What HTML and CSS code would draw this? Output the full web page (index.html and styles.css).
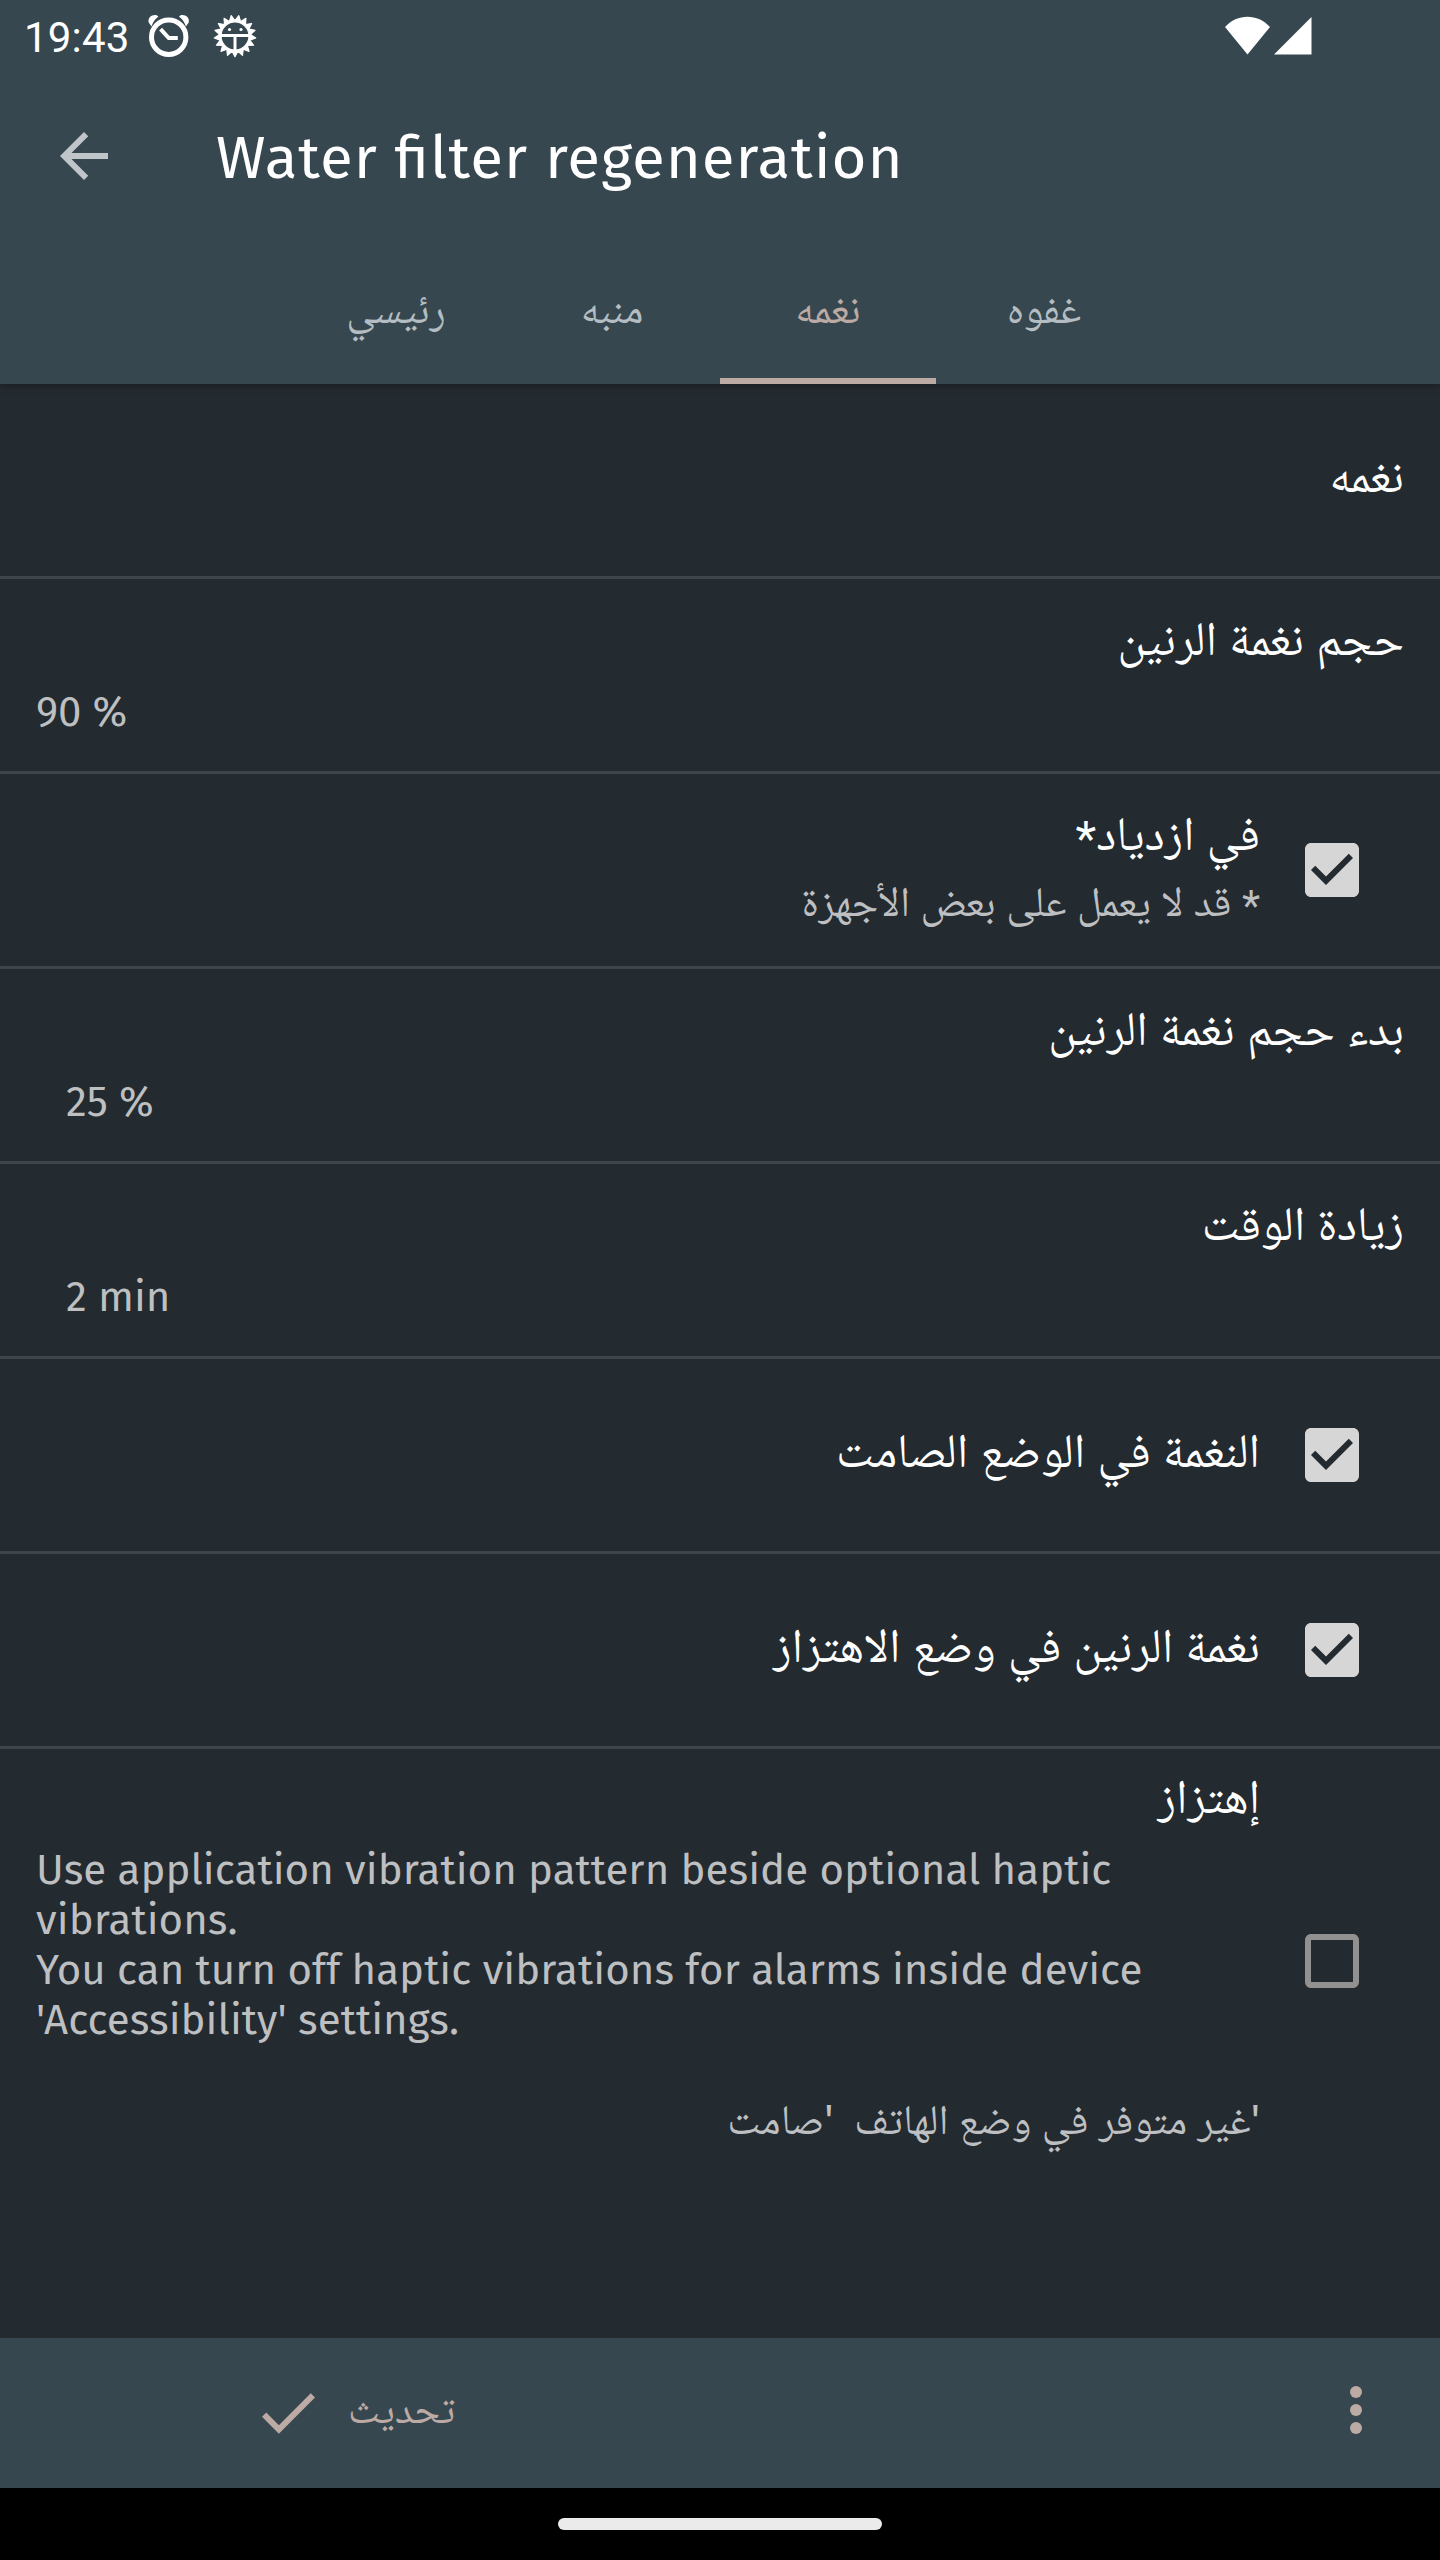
FILE: index.html
```html
<!DOCTYPE html>
<html lang="ar">
<head>
<meta charset="utf-8">
<title>Water filter regeneration</title>
<link rel="stylesheet" href="styles.css">
</head>
<body>
<div class="screen">
  <header class="header">
    <div class="status">
      <span class="clock">19:43</span>
      <svg class="status-alarm" width="44" height="44" viewBox="0 0 44 44" fill="none" stroke="#fff">
        <circle cx="21.7" cy="23.2" r="17.2" stroke-width="5"/>
        <path d="M13.6 15.2 21.8 24h9" stroke-width="4"/>
        <path d="M4.5 12.5 1.7 8.6C.6 4 4 1 8 1c1.6 0 2.8.6 3.3 1.7C8.2 4.8 5.8 8 4.5 12.5zM38.9 12.5l2.8-3.9C42.8 4 39.4 1 35.4 1c-1.6 0-2.8.6-3.3 1.7 3.1 2.1 5.5 5.3 6.8 9.8z" fill="#fff" stroke="none"/>
      </svg>
      <svg class="status-gear" width="44" height="44" viewBox="-22 -22 44 44" fill="#fff">
        <path fill-rule="evenodd" stroke="#fff" stroke-width="1.2" stroke-linejoin="round" d="M0 20.8 2.85 15.24 7.51 19.4 8.16 13.18 14.01 15.37 12.37 9.34 18.62 9.27 14.91 4.24 20.71 1.92 15.43-1.43 20.01-5.69 13.88-6.91 16.6-12.53 10.44-11.45 10.95-17.69 5.6-14.45 3.82-20.45 0-15.5-3.82-20.45-5.6-14.45-10.95-17.69-10.44-11.45-16.6-12.53-13.88-6.91-20.01-5.69-15.43-1.43-20.71 1.92-14.91 4.24-18.62 9.27-12.37 9.34-14.01 15.37-8.16 13.18-7.51 19.4-2.85 15.24zM-14 0a14 14 0 0 0 28 0a14 14 0 0 0-28 0z"/>
        <path d="M-14-2h28v3H1.500V14h-3V1H-14z"/>
        <circle cx="-5.500" cy="-6.500" r="1.600"/><circle cx="6" cy="-6.500" r="1.600"/>
      </svg>
      <svg class="status-signal" width="88" height="40" viewBox="0 0 88 40" fill="#fff">
        <path d="M0 11C12-2.800 33-2.800 45 11L22.500 38.500zM49 38.500 86.500 1v37.500z"/>
      </svg>
    </div>
    <div class="appbar">
      <svg class="back" width="48" height="48" viewBox="4 4 16 16" fill="#bfc5c8"><path d="M20 11H7.830l5.590-5.590L12 4l-8 8 8 8 1.410-1.410L7.830 13H20v-2z"/></svg>
      <h1 class="title">Water filter regeneration</h1>
    </div>
    <nav class="tabs">
      <span class="tab">رئيسي</span>
      <span class="tab">منبه</span>
      <span class="tab tab-active">نغمه</span>
      <span class="tab">غفوه</span>
    </nav>
  </header>

  <main class="list">
    <section class="row row-single">
      <div class="text"><h2 class="name">نغمه</h2></div>
    </section>
    <section class="row">
      <div class="text"><h2 class="name">حجم نغمة الرنين</h2><p class="value">90 %</p></div>
    </section>
    <section class="row">
      <div class="text"><h2 class="name">في ازدياد<span class="mark">*</span></h2><p class="note note-tight"><span class="mark">*</span> قد لا يعمل على بعض الأجهزة</p></div>
      <svg class="box" width="54" height="54" viewBox="3 3 18 18" fill="#d6d6d6"><path d="M19 3H5c-1.110 0-2 .9-2 2v14c0 1.100.89 2 2 2h14c1.110 0 2-.9 2-2V5c0-1.100-.89-2-2-2zm-9 14-5-5 1.410-1.410L10 14.170l7.590-7.590L19 8l-9 9z"/></svg>
    </section>
    <section class="row">
      <div class="text"><h2 class="name">بدء حجم نغمة الرنين</h2><p class="value value-indent">25 %</p></div>
    </section>
    <section class="row">
      <div class="text"><h2 class="name">زيادة الوقت</h2><p class="value value-indent">2 min</p></div>
    </section>
    <section class="row row-single">
      <div class="text"><h2 class="name">النغمة في الوضع الصامت</h2></div>
      <svg class="box" width="54" height="54" viewBox="3 3 18 18" fill="#d6d6d6"><path d="M19 3H5c-1.110 0-2 .9-2 2v14c0 1.100.89 2 2 2h14c1.110 0 2-.9 2-2V5c0-1.100-.89-2-2-2zm-9 14-5-5 1.410-1.410L10 14.170l7.590-7.590L19 8l-9 9z"/></svg>
    </section>
    <section class="row row-single">
      <div class="text"><h2 class="name">نغمة الرنين في وضع الاهتزاز</h2></div>
      <svg class="box" width="54" height="54" viewBox="3 3 18 18" fill="#d6d6d6"><path d="M19 3H5c-1.110 0-2 .9-2 2v14c0 1.100.89 2 2 2h14c1.110 0 2-.9 2-2V5c0-1.100-.89-2-2-2zm-9 14-5-5 1.410-1.410L10 14.170l7.590-7.590L19 8l-9 9z"/></svg>
    </section>
    <section class="row row-tall">
      <div class="text">
        <h2 class="name">إهتزاز</h2>
        <p class="value">Use application vibration pattern beside optional haptic<br>vibrations.<br>You can turn off haptic vibrations for alarms inside device<br>'Accessibility' settings.</p>
        <p class="note note-last">'غير متوفر في وضع الهاتف&nbsp; 'صامت</p>
      </div>
      <svg class="box" width="54" height="54" viewBox="3 3 18 18" fill="#919191"><path d="M19 5v14H5V5h14m0-2H5c-1.100 0-2 .9-2 2v14c0 1.100.9 2 2 2h14c1.100 0 2-.9 2-2V5c0-1.100-.9-2-2-2z"/></svg>
    </section>
  </main>

  <footer class="actions">
    <svg class="done" width="53" height="41" viewBox="3.400 5.600 17.600 13.400" fill="#bcaaa4"><path d="M9 16.170 4.830 12l-1.420 1.410L9 19 21 7l-1.410-1.410z"/></svg>
    <span class="update">تحديث</span>
    <svg class="more" width="12" height="48" viewBox="0 0 12 48" fill="#bcaaa4"><circle cx="6" cy="6" r="6"/><circle cx="6" cy="24" r="6"/><circle cx="6" cy="42" r="6"/></svg>
  </footer>
  <div class="navbar"><div class="pill"></div></div>
</div>
</body>
</html>
```
FILE: styles.css
```css
* { box-sizing: border-box; margin: 0; padding: 0; }

body {
  background: #232a30;
  color: #fff;
  font-family: "Fira Sans", "Noto Naskh Arabic", "Noto Sans", "DejaVu Sans", sans-serif;
  font-weight: 400;
}

svg { display: block; flex: none; }

.screen { display: flex; flex-direction: column; width: 1440px; height: 2560px; }

.header {
  height: 384px;
  background: #37474f;
  box-shadow: 0 1px 8px rgba(0, 0, 0, .4);
}

.status { display: flex; height: 72px; padding: 0 128px 0 24px; }
.clock { width: 123px; padding-top: 13px; font: 42px/50px Roboto, sans-serif; letter-spacing: .2px; white-space: nowrap; }
.status-alarm { margin-top: 14px; }
.status-gear { margin: 14px 0 0 22px; }
.status-signal { margin: 15.5px -1px 0 auto; }

.appbar { display: flex; align-items: center; height: 168px; padding-left: 60px; }
.title {
  margin: 4px 0 0 108px;
  font-size: 60px;
  font-weight: 400;
  line-height: 72px;
  letter-spacing: .95px;
  font-feature-settings: "liga" 1;
  white-space: nowrap;
}

.tabs { display: flex; height: 144px; padding-left: 288px; }
.tab {
  width: 216px;
  padding-top: 43.5px;
  color: #b4bdc1;
  font-size: 42px;
  line-height: 50px;
  text-align: center;
}
.tab-active { color: #bcaaa4; border-bottom: 6px solid #bcaaa4; }

.list { flex: 1; }
.row {
  display: flex;
  align-items: center;
  height: 195px;
  padding: 0 36px;
  border-bottom: 3px solid #3e464d;
}
.text { flex: 1; align-self: flex-start; padding-top: 30px; white-space: nowrap; }
.row-single .text { padding-top: 62px; }
.name { direction: rtl; font-size: 48px; font-weight: 400; line-height: 60px; word-spacing: -.4px; }
.value, .note { color: #bdbfc1; font-size: 42px; line-height: 50px; }
.value { margin-top: 18px; }
.value-indent { padding-left: 30px; }
.note { direction: rtl; word-spacing: -.6px; }
.note-tight { margin-top: 13px; }
.note-last { margin-top: 50px; word-spacing: -.8px; }
.mark { font-family: Roboto, sans-serif; line-height: 0; vertical-align: -.1em; }
.box { margin: 0 45px; }

.row-tall { height: 424px; border-bottom: 0; }
.row-tall .text { padding-top: 18px; }
.row-tall .value { letter-spacing: .07px; font-feature-settings: "liga" 1; }

.actions {
  display: flex;
  height: 150px;
  padding: 0 78px 0 262px;
  background: #37474f;
}
.done { margin-top: 55px; }
.update { margin: 47px 0 0 33px; color: #bcaaa4; font-size: 40.5px; line-height: 50px; }
.more { margin: 48px 0 0 auto; }

.navbar { height: 72px; padding-top: 30px; background: #000; }
.pill { width: 324px; height: 12px; margin: 0 auto; border-radius: 6px; background: #ebebeb; }
```
